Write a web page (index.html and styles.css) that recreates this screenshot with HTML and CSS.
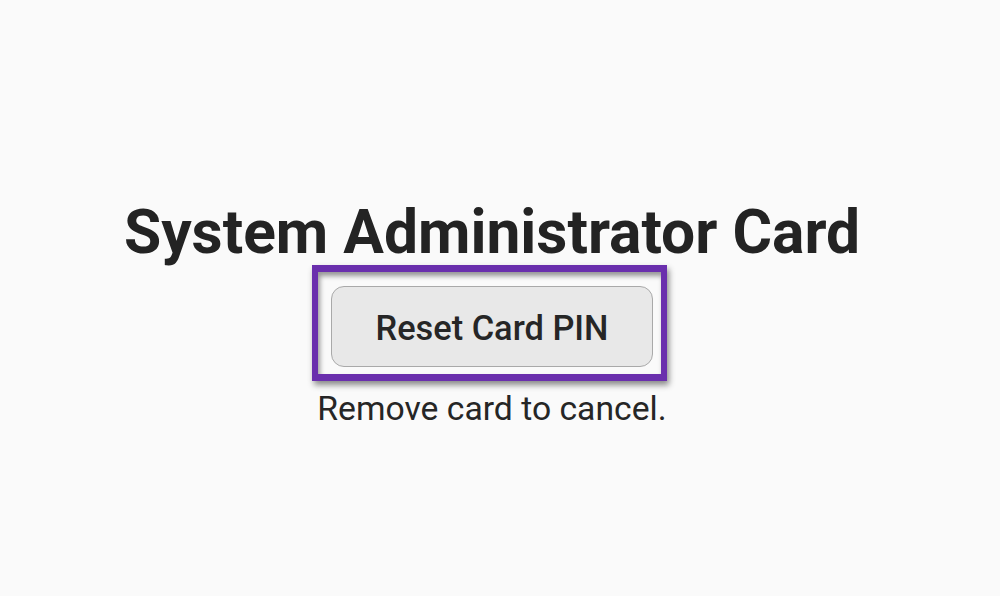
FILE: index.html
```html
<!DOCTYPE html>
<html>
<head>
<meta charset="utf-8">
<link rel="stylesheet" href="styles.css">
</head>
<body>
<main class="screen">
  <h1 class="title">System Administrator Card</h1>
  <div class="focus-ring">
    <button class="btn">Reset Card PIN</button>
  </div>
  <p class="hint">Remove card to cancel.</p>
</main>
</body>
</html>
```
FILE: styles.css
```css
html, body {
  margin: 0;
  padding: 0;
  background: #fafafa;
}
body {
  width: 1000px;
  height: 596px;
  overflow: hidden;
  font-family: Roboto, "Noto Sans", sans-serif;
  color: #222;
}
.screen {
  display: flex;
  flex-direction: column;
  align-items: center;
  padding-top: 197px;
  padding-right: 16px;
}
.title {
  margin: 0 0 -3px;
  font-size: 60.5px;
  font-weight: 700;
  line-height: 71px;
  color: #232323;
  white-space: nowrap;
  text-align: center;
}
.focus-ring {
  position: relative;
  border-style: solid;
  border-color: #6a2fad;
  border-width: 7px 6px;
  padding: 14px 8px 7px 13px;
  margin-right: 5px;
  box-shadow: 2px 4px 6px rgba(0,0,0,0.45), inset 2px 4px 5px rgba(0,0,0,0.4);
}
.btn {
  display: block;
  box-sizing: border-box;
  width: 322px;
  height: 81px;
  border: 1.5px solid #a9a9a9;
  border-radius: 13px;
  background: #e8e8e8;
  font-family: Roboto, "Noto Sans", sans-serif;
  font-size: 34.4px;
  font-weight: 500;
  line-height: 40px;
  color: #262626;
  padding: 3px 0 0;
  text-align: center;
  white-space: nowrap;
}
.hint {
  margin: 8px 0 0;
  font-size: 33.7px;
  line-height: 40px;
  color: #262626;
  white-space: nowrap;
  text-align: center;
}
```
